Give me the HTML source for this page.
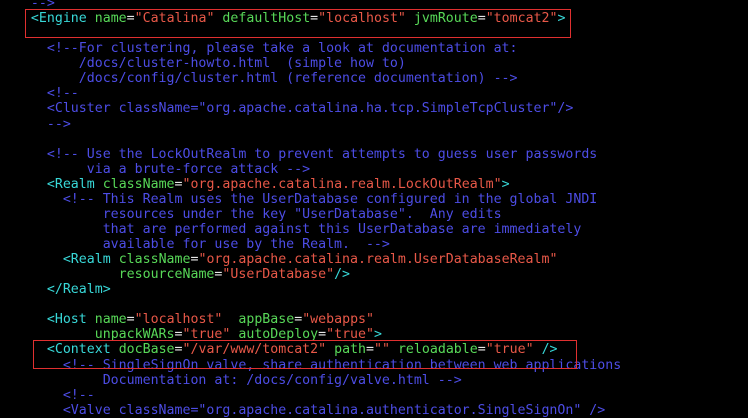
<!DOCTYPE html>
<html><head><style>
html,body{margin:0;padding:0;background:#000;width:748px;height:405px;overflow:hidden;}
pre{position:absolute;left:-1px;top:-4px;margin:0;font-family:"DejaVu Sans Mono","Liberation Mono",monospace;font-size:13.25px;line-height:15.07px;color:#e8e8e8;}
.c{color:#4d4de6}.t{color:#38d8d8}.a{color:#58d858}.v{color:#e85848}
.box{position:absolute;border:1.5px solid #e03030;}
</style></head><body>
<pre><span class="c">    --&gt;</span>
    <span class="t">&lt;Engine</span> <span class="a">name</span>=<span class="v">"Catalina"</span> <span class="a">defaultHost</span>=<span class="v">"localhost"</span> <span class="a">jvmRoute</span>=<span class="v">"tomcat2"</span><span class="t">&gt;</span>

<span class="c">      &lt;!--For clustering, please take a look at documentation at:
          /docs/cluster-howto.html  (simple how to)
          /docs/config/cluster.html (reference documentation) --&gt;
      &lt;!--
      &lt;Cluster className="org.apache.catalina.ha.tcp.SimpleTcpCluster"/&gt;
      --&gt;</span>

<span class="c">      &lt;!-- Use the LockOutRealm to prevent attempts to guess user passwords
           via a brute-force attack --&gt;</span>
      <span class="t">&lt;Realm</span> <span class="a">className</span>=<span class="v">"org.apache.catalina.realm.LockOutRealm"</span><span class="t">&gt;</span>
<span class="c">        &lt;!-- This Realm uses the UserDatabase configured in the global JNDI
             resources under the key "UserDatabase".  Any edits
             that are performed against this UserDatabase are immediately
             available for use by the Realm.  --&gt;</span>
        <span class="t">&lt;Realm</span> <span class="a">className</span>=<span class="v">"org.apache.catalina.realm.UserDatabaseRealm"</span>
               <span class="a">resourceName</span>=<span class="v">"UserDatabase"</span><span class="t">/&gt;</span>
      <span class="t">&lt;/Realm&gt;</span>

      <span class="t">&lt;Host</span> <span class="a">name</span>=<span class="v">"localhost"</span>  <span class="a">appBase</span>=<span class="v">"webapps"</span>
            <span class="a">unpackWARs</span>=<span class="v">"true"</span> <span class="a">autoDeploy</span>=<span class="v">"true"</span><span class="t">&gt;</span>
      <span class="t">&lt;Context</span> <span class="a">docBase</span>=<span class="v">"/var/www/tomcat2"</span> <span class="a">path</span>=<span class="v">""</span> <span class="a">reloadable</span>=<span class="v">"true"</span> <span class="t">/&gt;</span>
<span class="c">        &lt;!-- SingleSignOn valve, share authentication between web applications
             Documentation at: /docs/config/valve.html --&gt;
        &lt;!--
        &lt;Valve className="org.apache.catalina.authenticator.SingleSignOn" /&gt;</span>
</pre>
<div class="box" style="left:25px;top:9px;width:544px;height:27px;"></div>
<div class="box" style="left:33px;top:340px;width:542px;height:27px;"></div>
</body></html>
